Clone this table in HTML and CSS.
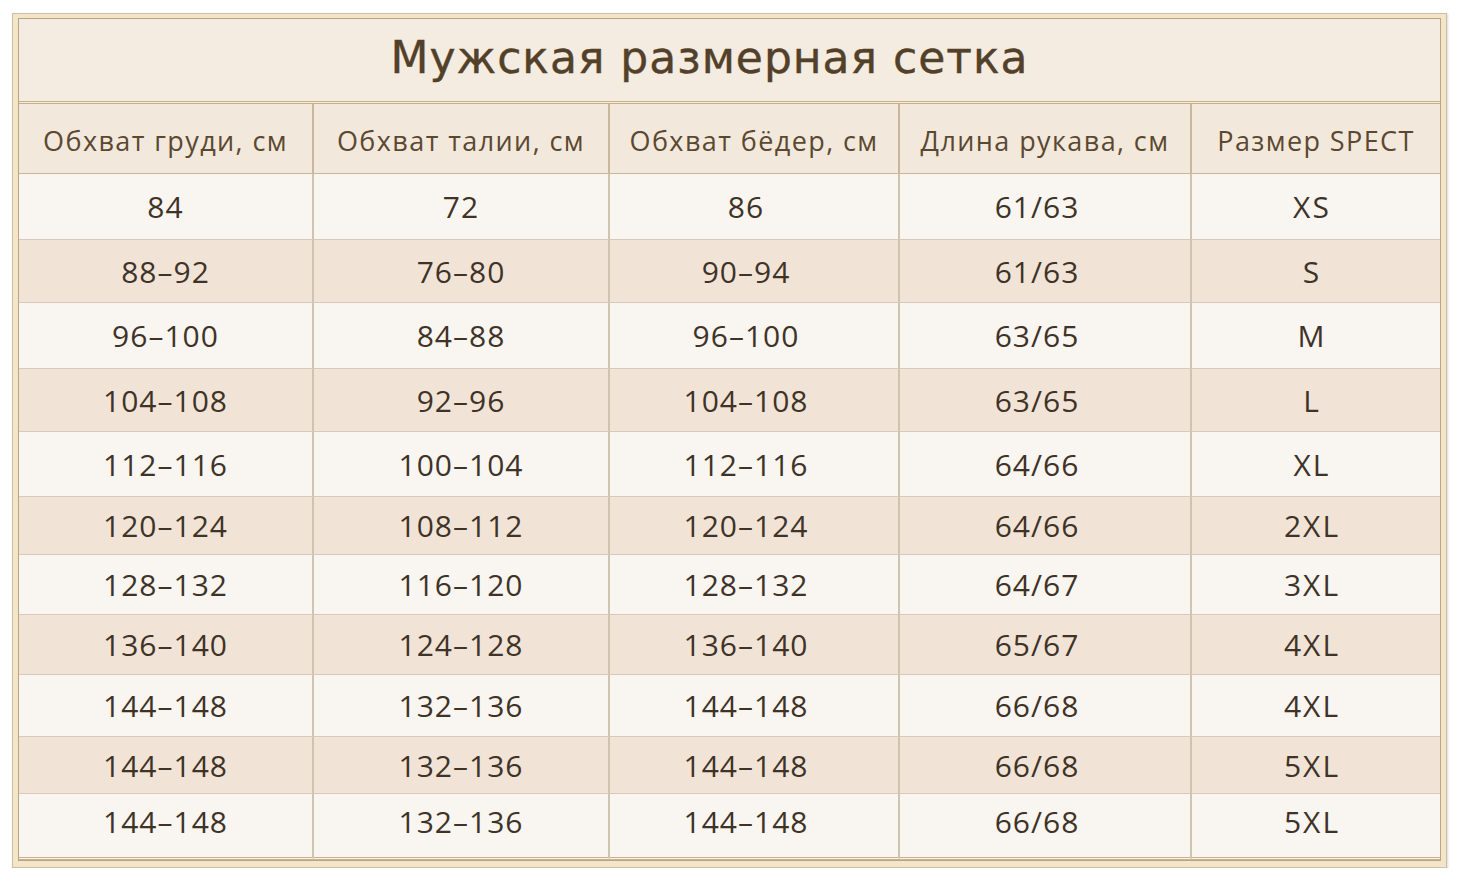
FILE: index.html
```html
<!DOCTYPE html>
<html lang="ru">
<head>
<meta charset="utf-8">
<title>Мужская размерная сетка</title>
<link rel="stylesheet" href="styles.css">
</head>
<body>
<div class="frame">
  <div class="inner">
    <div class="title">Мужская размерная сетка</div>
    <div class="grid">
      <div class="cell head">Обхват груди, см</div>
      <div class="cell head">Обхват талии, см</div>
      <div class="cell head">Обхват бёдер, см</div>
      <div class="cell head">Длина рукава, см</div>
      <div class="cell head">Размер SPECT</div>

      <div class="cell l">84</div><div class="cell l">72</div><div class="cell l">86</div><div class="cell l">61/63</div><div class="cell l">XS</div>
      <div class="cell d">88–92</div><div class="cell d">76–80</div><div class="cell d">90–94</div><div class="cell d">61/63</div><div class="cell d">S</div>
      <div class="cell l">96–100</div><div class="cell l">84–88</div><div class="cell l">96–100</div><div class="cell l">63/65</div><div class="cell l">M</div>
      <div class="cell d">104–108</div><div class="cell d">92–96</div><div class="cell d">104–108</div><div class="cell d">63/65</div><div class="cell d">L</div>
      <div class="cell l">112–116</div><div class="cell l">100–104</div><div class="cell l">112–116</div><div class="cell l">64/66</div><div class="cell l">XL</div>
      <div class="cell d">120–124</div><div class="cell d">108–112</div><div class="cell d">120–124</div><div class="cell d">64/66</div><div class="cell d">2XL</div>
      <div class="cell l">128–132</div><div class="cell l">116–120</div><div class="cell l">128–132</div><div class="cell l">64/67</div><div class="cell l">3XL</div>
      <div class="cell d">136–140</div><div class="cell d">124–128</div><div class="cell d">136–140</div><div class="cell d">65/67</div><div class="cell d">4XL</div>
      <div class="cell l">144–148</div><div class="cell l">132–136</div><div class="cell l">144–148</div><div class="cell l">66/68</div><div class="cell l">4XL</div>
      <div class="cell d">144–148</div><div class="cell d">132–136</div><div class="cell d">144–148</div><div class="cell d">66/68</div><div class="cell d">5XL</div>
      <div class="cell l">144–148</div><div class="cell l">132–136</div><div class="cell l">144–148</div><div class="cell l">66/68</div><div class="cell l">5XL</div>
    </div>
  </div>
</div>
</body>
</html>
```

FILE: styles.css
```css
html, body {
  margin: 0;
  padding: 0;
  background: #ffffff;
}
body {
  padding: 13px 0 0 12px;
  font-family: "Open Sans", "DejaVu Sans", sans-serif;
}
.frame {
  width: 1435px;
  height: 855px;
  box-sizing: border-box;
  border: 1px solid #cdbfa6;
  background: #f3e5c9;
  padding: 4px 5px 6px 5px;
  box-shadow: 1px 1px 2px rgba(120, 100, 70, 0.25);
}
.inner {
  height: 100%;
  box-sizing: border-box;
  border: 1px solid #bba57f;
  background: #f4ece2;
  display: flex;
  flex-direction: column;
}
.title {
  height: 85px;
  flex: none;
  display: flex;
  align-items: center;
  justify-content: center;
  font-family: "DejaVu Sans", sans-serif;
  font-size: 44px;
  letter-spacing: 1px;
  color: #524029;
  -webkit-text-stroke: 0.4px #524029;
  background: #f4ebe1;
  border-bottom: 3px double #c7b08a;
  padding: 0 40px 6px 0;
  box-sizing: border-box;
}
.grid {
  flex: 1;
  display: grid;
  grid-template-columns: 295px 296px 290px 292px 1fr;
  grid-template-rows: 70px 66px 63px 66px 63px 65px 58px 60px 60px 62px 57px 1fr;
}
.cell {
  display: flex;
  align-items: center;
  justify-content: center;
  font-size: 30px;
  letter-spacing: 1px;
  color: #3f3327;
  border-right: 2px solid #cfc3b1;
  border-bottom: 1px solid #d6cabb;
  box-sizing: border-box;
}
.cell:nth-child(5n) {
  border-right: none;
}
.cell:not(.head):nth-child(5n+3),
.cell:not(.head):nth-child(5n+4) {
  padding-right: 16px;
}
.cell:not(.head):nth-child(5n) {
  padding-right: 8px;
  letter-spacing: 2px;
}
.head {
  font-size: 27px;
  letter-spacing: 1.4px;
  color: #5b4831;
  background: #f3e8dc;
  border-bottom: 1px solid #c9b79c;
  border-right: 2px solid #c9b79c;
  padding-top: 3px;
}
.l {
  background: #f9f5f1;
}
.d {
  background: #f1e4d7;
}
.grid .cell:nth-last-child(-n+5) {
  border-bottom: 3px double #c7b08a;
  padding-bottom: 8px;
}
```
